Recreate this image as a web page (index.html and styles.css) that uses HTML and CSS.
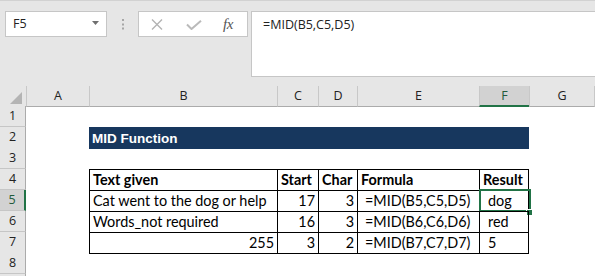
FILE: index.html
```html
<!DOCTYPE html>
<html>
<head>
<meta charset="utf-8">
<link rel="stylesheet" href="styles.css">
</head>
<body>
<div class="app">
  <div class="toolbar">
    <div class="namebox">
      <span class="nb-text">F5</span>
      <svg class="nb-arrow" width="7" height="4" viewBox="0 0 7 4"><polygon points="0,0 7,0 3.5,4" fill="#6f6f6f"/></svg>
    </div>
    <div class="grip">
      <svg width="2" height="11" viewBox="0 0 2 11"><rect x="0" y="0" width="2" height="2" fill="#a6a6a6"/><rect x="0" y="4.5" width="2" height="2" fill="#a6a6a6"/><rect x="0" y="8.5" width="2" height="2" fill="#a6a6a6"/></svg>
    </div>
    <div class="fxbox">
      <svg class="ic-x" width="12" height="11" viewBox="0 0 12 11"><path d="M1 0.5 L11 10.5 M11 0.5 L1 10.5" stroke="#b3b3b3" stroke-width="1.4" fill="none"/></svg>
      <svg class="ic-check" width="16" height="10" viewBox="0 0 16 10"><path d="M1 4.5 L5.5 9 L15 0.8" stroke="#bababa" stroke-width="2" fill="none"/></svg>
      <span class="ic-fx">fx</span>
    </div>
    <div class="formula">=MID(B5,C5,D5)</div>
  </div>

  <div class="sheet">
    <div class="row head">
      <div class="corner"><svg width="12" height="12" viewBox="0 0 12 12"><polygon points="12,0 12,12 0,12" fill="#b4b4b4"/></svg></div>
      <div class="ch">A</div>
      <div class="ch">B</div>
      <div class="ch">C</div>
      <div class="ch">D</div>
      <div class="ch">E</div>
      <div class="ch sel">F</div>
      <div class="ch last">G</div>
    </div>

    <div class="row">
      <div class="rh">1</div>
      <div></div><div></div><div></div><div></div><div></div><div></div><div></div>
    </div>

    <div class="row">
      <div class="rh">2</div>
      <div></div>
      <div class="title">MID Function</div>
      <div></div>
    </div>

    <div class="row">
      <div class="rh">3</div>
      <div></div><div></div><div></div><div></div><div></div><div></div><div></div>
    </div>

    <div class="row">
      <div class="rh">4</div>
      <div></div>
      <div class="t bold">Text given</div>
      <div class="t bold">Start</div>
      <div class="t bold">Char</div>
      <div class="t bold">Formula</div>
      <div class="t bold r">Result</div>
      <div></div>
    </div>

    <div class="row">
      <div class="rh sel">5</div>
      <div></div>
      <div class="t">Cat went to the dog or help</div>
      <div class="t num">17</div>
      <div class="t num">3</div>
      <div class="t fml">=MID(B5,C5,D5)</div>
      <div class="t r res active">dog<span class="cursor"></span><span class="handle"></span></div>
      <div></div>
    </div>

    <div class="row">
      <div class="rh">6</div>
      <div></div>
      <div class="t">Words_not required</div>
      <div class="t num">16</div>
      <div class="t num">3</div>
      <div class="t fml">=MID(B6,C6,D6)</div>
      <div class="t r res">red</div>
      <div></div>
    </div>

    <div class="row">
      <div class="rh">7</div>
      <div></div>
      <div class="t b num">255</div>
      <div class="t b num">3</div>
      <div class="t b num">2</div>
      <div class="t b fml">=MID(B7,C7,D7)</div>
      <div class="t b r res">5</div>
      <div></div>
    </div>

    <div class="row">
      <div class="rh">8</div>
      <div></div><div></div><div></div><div></div><div></div><div></div><div></div>
    </div>

    <div class="row">
      <div class="rh"></div>
      <div></div><div></div><div></div><div></div><div></div><div></div><div></div>
    </div>
  </div>
</div>
</body>
</html>
```

FILE: styles.css
```css
* { box-sizing: border-box; }
html, body { margin: 0; padding: 0; }
body {
  width: 595px;
  height: 276px;
  overflow: hidden;
  background: #e6e6e6;
  font-family: "Open Sans", "Noto Sans", sans-serif;
}
.app { width: 595px; }

.toolbar {
  height: 86px;
  border-top: 1px solid #d2d2d2;
  padding-top: 10px;
  display: flex;
  align-items: flex-start;
}
.namebox {
  margin-left: 5px;
  width: 102px;
  height: 26px;
  background: #fff;
  border: 1px solid #c6c6c6;
  display: flex;
  align-items: center;
  justify-content: space-between;
  padding: 0 7px 0 7px;
}
.nb-text { font-size: 12.5px; color: #222; line-height: 16px; }
.nb-arrow { margin-top: -2px; }
.grip {
  width: 31px;
  height: 26px;
  display: flex;
  justify-content: center;
  align-items: center;
  padding-left: 1px;
}
.fxbox {
  width: 110px;
  height: 26px;
  background: #fff;
  border: 1px solid #c6c6c6;
  display: flex;
  align-items: center;
  padding-left: 12px;
  margin-right: 3px;
}
.ic-x { margin-top: 1px; }
.ic-check { margin-left: 23px; margin-top: 1px; }
.ic-fx {
  margin-left: 21px;
  font-family: "Liberation Serif", serif;
  font-style: italic;
  font-size: 15px;
  color: #555;
  line-height: 16px;
  letter-spacing: -0.5px;
}
.formula {
  flex: 1;
  height: 66px;
  margin-right: -2px;
  background: #fff;
  border: 1px solid #c6c6c6;
  padding: 5px 0 0 11px;
  font-size: 12.5px;
  line-height: 16px;
  color: #222;
}

.sheet { background: #fff; }
.row {
  display: grid;
  grid-template-columns: 26px 63px 188px 41px 39px 122px 50px 66px;
  height: 21px;
  background: #fff;
}
.row.head {
  height: 20px;
  background: #e6e6e6;
}
.corner {
  border-bottom: 1px solid #ababab;
  display: flex;
  align-items: flex-end;
  justify-content: flex-end;
  padding: 0 4px 2px 0;
}
.ch {
  border-bottom: 1px solid #ababab;
  border-left: 1px solid #c8c8c8;
  text-align: center;
  font-size: 12.5px;
  line-height: 19px;
  color: #222;
}
.ch.last { border-right: 1px solid #c8c8c8; }
.ch.sel {
  background: #d2d2d2;
  border-bottom: 2px solid #217346;
  color: #215a3a;
}
.rh {
  background: #e6e6e6;
  border-bottom: 1px solid #c6c6c6;
  border-right: 1px solid #ababab;
  text-align: center;
  font-size: 12.5px;
  line-height: 20px;
  color: #222;
}
.rh.sel {
  background: #d2d2d2;
  border-right: 2px solid #217346;
  color: #215a3a;
}

.title {
  grid-column: span 5;
  background: #17375e;
  color: #fff;
  font-family: "Liberation Sans", Arial, sans-serif;
  font-weight: bold;
  font-size: 13.5px;
  line-height: 21px;
  padding: 1px 0 0 3px;
}

.t {
  border-left: 1px solid #000;
  border-top: 1px solid #000;
  font-family: Lato, "Open Sans", sans-serif;
  font-size: 14.4px;
  line-height: 20px;
  color: #000;
  padding: 0 3px;
  white-space: nowrap;
  position: relative;
}
.t.r { border-right: 1px solid #000; }
.t.b { border-bottom: 1px solid #000; }
.t.bold { font-weight: bold; }
.t.num { text-align: right; }
.t.fml { padding-left: 7px; }
.t.res { padding-left: 8px; }

.cursor {
  position: absolute;
  left: -1px;
  top: -2px;
  width: 52px;
  height: 23px;
  border: 2px solid #217346;
}
.handle {
  position: absolute;
  left: 46px;
  top: 18px;
  width: 7px;
  height: 7px;
  background: #217346;
  border: 1px solid #fff;
}
```
